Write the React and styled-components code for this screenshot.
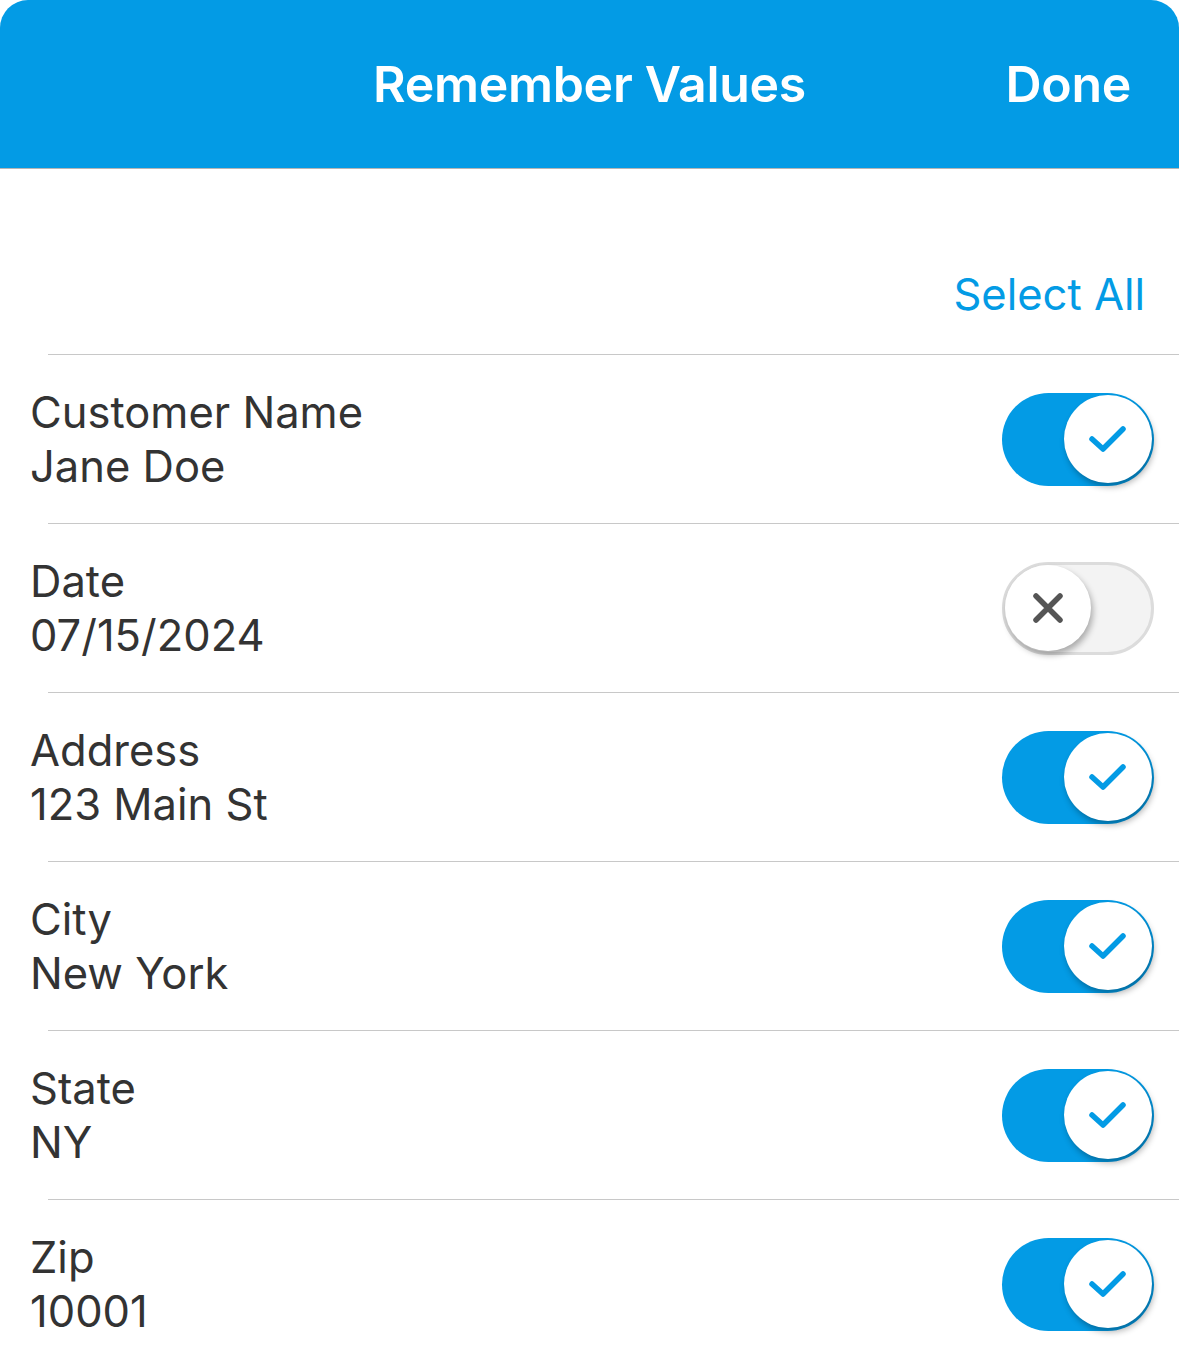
import React, { useState } from 'react'
import styled, { createGlobalStyle } from 'styled-components'

const GlobalStyle = createGlobalStyle`
  body {
    margin: 0;
    background: #fff;
    font-family: Inter, "Noto Sans", sans-serif;
  }
`

const fields = [
  { label: 'Customer Name', value: 'Jane Doe', on: true },
  { label: 'Date', value: '07/15/2024', on: false },
  { label: 'Address', value: '123 Main St', on: true },
  { label: 'City', value: 'New York', on: true },
  { label: 'State', value: 'NY', on: true },
  { label: 'Zip', value: '10001', on: true },
]

function Check() {
  return (
    <svg width="46" height="46" viewBox="0 0 46 46" fill="none">
      <path d="M7 23 L18 33 L38 13" stroke="#039be5" strokeWidth="5.5" strokeLinecap="round" strokeLinejoin="round" />
    </svg>
  )
}

function Cross() {
  return (
    <svg width="34" height="34" viewBox="0 0 34 34" fill="none">
      <path d="M5 5 L29 29 M29 5 L5 29" stroke="#555" strokeWidth="5.5" strokeLinecap="round" />
    </svg>
  )
}

function App() {
  const [items, setItems] = useState(fields)
  const toggle = (i) => {
    setItems(items.map((it, j) => (j === i ? { ...it, on: !it.on } : it)))
  }
  const selectAll = () => setItems(items.map((it) => ({ ...it, on: true })))

  return (
    <Screen>
      <GlobalStyle />
      <Header>
        <span />
        <Title>Remember Values</Title>
        <DoneButton>Done</DoneButton>
      </Header>
      <Toolbar>
        <LinkButton onClick={selectAll}>Select All</LinkButton>
      </Toolbar>
      {items.map((it, i) => (
        <React.Fragment key={it.label}>
          <Divider />
          <Row>
            <TextBlock>
              <Line>{it.label}</Line>
              <Line>{it.value}</Line>
            </TextBlock>
            <Switch $on={it.on} onClick={() => toggle(i)}>
              <Thumb $on={it.on}>{it.on ? <Check /> : <Cross />}</Thumb>
            </Switch>
          </Row>
        </React.Fragment>
      ))}
    </Screen>
  )
}

export default App

const Screen = styled.div`
  width: 1179px;
  min-height: 1356px;
  background: #fff;
  overflow: hidden;
`

const Header = styled.header`
  height: 168px;
  background: #039be5;
  border-radius: 28px 28px 0 0;
  border-bottom: 1px solid #b5b5b5;
  display: grid;
  grid-template-columns: 1fr auto 1fr;
  align-items: center;
  color: #fff;
`

const Title = styled.h1`
  margin: 0;
  font-size: 50px;
  font-weight: 600;
  letter-spacing: -0.3px;
`

const DoneButton = styled.button`
  justify-self: end;
  margin-right: 48px;
  background: none;
  border: 0;
  padding: 0;
  color: #fff;
  font-family: inherit;
  font-size: 50px;
  font-weight: 600;
  letter-spacing: -0.3px;
  cursor: pointer;
`

const Toolbar = styled.div`
  height: 185px;
  display: flex;
  justify-content: flex-end;
  align-items: flex-end;
  padding: 0 34px 33px 0;
  box-sizing: border-box;
`

const LinkButton = styled.button`
  background: none;
  border: 0;
  padding: 0;
  font-family: inherit;
  font-size: 43.5px;
  line-height: 54px;
  color: #039be5;
  cursor: pointer;
`

const Divider = styled.div`
  height: 1px;
  margin-left: 48px;
  background: #c8c8c8;
`

const Row = styled.div`
  height: 168px;
  display: flex;
  align-items: center;
  justify-content: space-between;
  padding: 0 25px 0 30px;
`

const TextBlock = styled.div`
  display: flex;
  flex-direction: column;
  color: #333;
  font-size: 43.5px;
  line-height: 54px;
`

const Line = styled.span``

const Switch = styled.div`
  width: 152px;
  height: 93px;
  box-sizing: border-box;
  border-radius: 47px;
  padding: 2px;
  display: flex;
  align-items: center;
  justify-content: ${(p) => (p.$on ? 'flex-end' : 'flex-start')};
  background: ${(p) => (p.$on ? '#039be5' : '#f3f3f3')};
  border: ${(p) => (p.$on ? 'none' : '3px solid #dcdcdc')};
  cursor: pointer;
`

const Thumb = styled.div`
  width: ${(p) => (p.$on ? '88px' : '86px')};
  height: ${(p) => (p.$on ? '88px' : '86px')};
  margin-left: ${(p) => (p.$on ? '0' : '-2px')};
  border-radius: 50%;
  background: #fff;
  box-shadow: 2px 4px 6px rgba(0, 0, 0, 0.3);
  display: flex;
  align-items: center;
  justify-content: center;
`
